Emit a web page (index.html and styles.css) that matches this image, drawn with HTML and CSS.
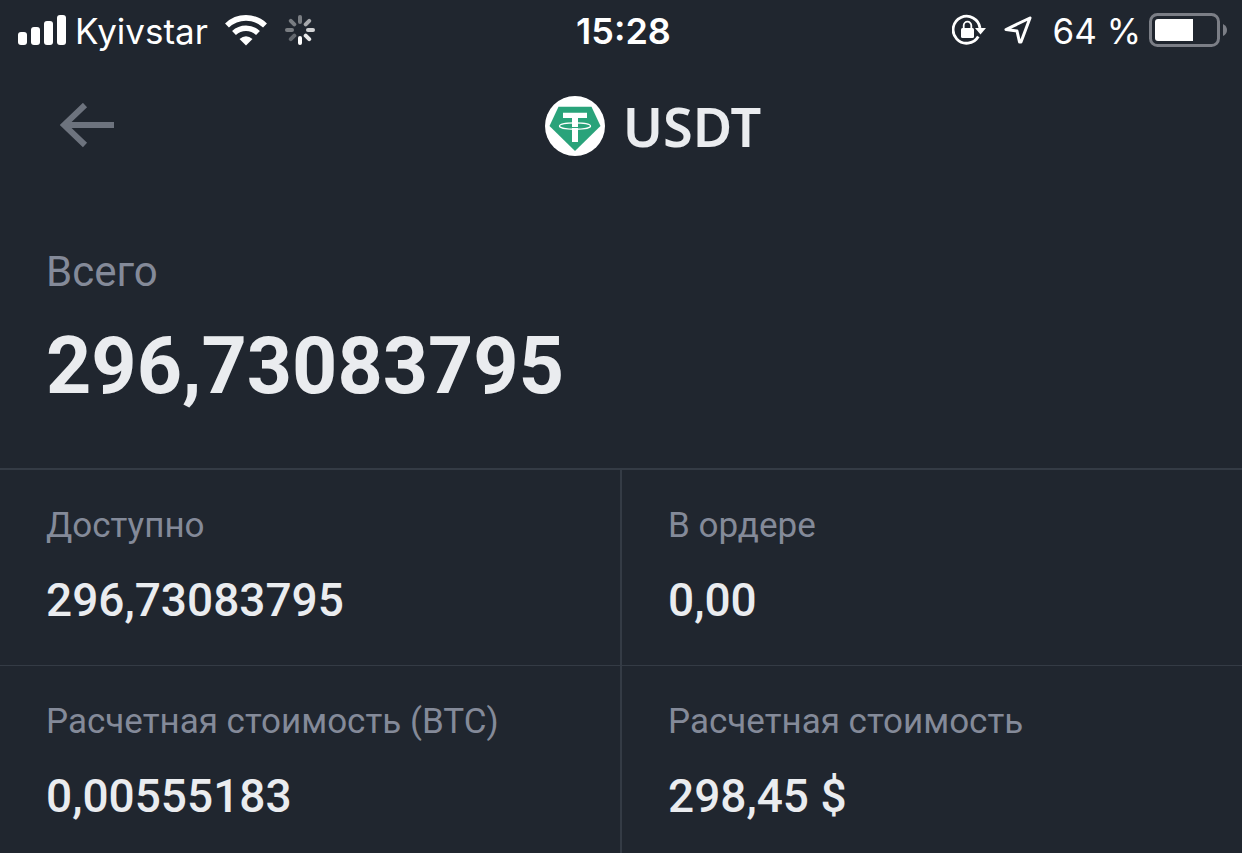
FILE: index.html
```html
<!DOCTYPE html>
<html lang="ru">
<head>
<meta charset="utf-8">
<meta name="viewport" content="width=device-width, initial-scale=1">
<title>USDT</title>
<link rel="stylesheet" href="styles.css">
</head>
<body>
<div class="status-bar">
  <div class="status-side">
    <svg class="signal" width="48" height="30" viewBox="0 0 48 30" fill="#fff" aria-hidden="true">
      <rect x="0" y="17" width="9" height="13" rx="3"/><rect x="13" y="12" width="9" height="18" rx="3"/><rect x="26" y="6" width="9" height="24" rx="3"/><rect x="39" y="0" width="9" height="30" rx="3"/>
    </svg>
    <span class="carrier">Kyivstar</span>
    <svg class="wifi" width="42" height="31" viewBox="0 0 42 31" fill="none" aria-hidden="true">
      <path d="M2 10.500A27.500 27.500 0 0 1 40 10.500" stroke="#fff" stroke-width="5.600"/><path d="M9 18A17.500 17.500 0 0 1 33 18" stroke="#fff" stroke-width="5.600"/><path d="M14.500 24Q21 18.500 27.500 24L21 30.500Z" fill="#fff"/>
    </svg>
    <svg class="spinner" width="30" height="30" viewBox="-15 -15 30 30" stroke="#fff" stroke-width="4" stroke-linecap="round" aria-hidden="true">
      <path d="M0-8V-13" opacity=".4"/><path d="M5.700-5.700L9.200-9.200" opacity=".6"/><path d="M8 0H13" opacity=".8"/><path d="M5.700 5.700L9.200 9.200" opacity=".9"/><path d="M0 8V13"/><path d="M-5.700 5.700L-9.200 9.200" opacity=".3"/><path d="M-8 0H-13" opacity=".4"/><path d="M-5.700-5.700L-9.200-9.200" opacity=".4"/>
    </svg>
  </div>
  <time class="clock">15:28</time>
  <div class="status-side status-right">
    <svg class="lock" width="34" height="32" viewBox="0 0 34 32" fill="none" aria-hidden="true">
      <path d="M26.300 22.500A13.500 13.500 0 1 1 28 14" stroke="#fff" stroke-width="2.800"/><path d="M23 14H34L28.500 20.500Z" fill="#fff"/><rect x="9" y="14" width="13" height="10" rx="1.500" fill="#fff"/><path d="M11.700 15V11.500a3.800 3.800 0 0 1 7.600 0V15" stroke="#fff" stroke-width="1.800"/>
    </svg>
    <svg class="location" width="28" height="28" viewBox="0 0 28 28" fill="none" stroke="#fff" stroke-width="3" stroke-linejoin="round" aria-hidden="true"><path d="M26 2L2 13.500L13 15L15.500 26H17Z"/></svg>
    <span class="percent">64 %</span>
    <svg class="battery" width="78" height="34" viewBox="0 0 78 34" fill="none" aria-hidden="true">
      <rect x="1.500" y="1.500" width="68" height="31" rx="7" stroke="#7b7e86" stroke-width="3"/><path d="M9 6H44V28H9Q6 28 6 25V9Q6 6 9 6Z" fill="#fff"/><path d="M74 11Q78 13 78 17T74 23Z" fill="#7b7e86"/>
    </svg>
  </div>
</div>
<header class="header">
  <button class="back" type="button" aria-label="Назад">
    <svg width="56" height="46" viewBox="0 0 56 46" fill="none" stroke="#6d737e" stroke-width="6" aria-hidden="true"><path d="M25 2L4 22L25 42M4 22H54"/></svg>
  </button>
  <h1 class="title">
    <svg width="60" height="60" viewBox="0 0 60 60" aria-hidden="true">
      <circle cx="30" cy="30" r="30" fill="#fff"/><path d="M13.500 10.700H46.500L55.500 30L30 55L4.500 30Z" fill="#29a37a"/><path d="M18 16.700H42V22H33V46H27V22H18Z" fill="#fff"/><ellipse cx="30" cy="30" rx="15.500" ry="3.200" fill="none" stroke="#fff" stroke-width="1.300"/><path d="M27 31.500H33" stroke="#29a37a"/>
    </svg>
    <span>USDT</span>
  </h1>
</header>
<main>
  <section class="total">
    <h2 class="total-label">Всего</h2>
    <p class="total-value">296,73083795</p>
  </section>
  <dl class="balances">
    <div class="cell"><dt>Доступно</dt><dd>296,73083795</dd></div>
    <div class="cell"><dt>В ордере</dt><dd>0,00</dd></div>
    <div class="cell"><dt>Расчетная стоимость (BTC)</dt><dd>0,00555183</dd></div>
    <div class="cell"><dt>Расчетная стоимость</dt><dd>298,45 $</dd></div>
  </dl>
</main>
</body>
</html>
```
FILE: styles.css
```css
* { box-sizing: border-box; }
body {
  margin: 0;
  min-height: 100vh;
  background: #20262f;
  color: #eaecef;
  font-family: Roboto, "Liberation Sans", sans-serif;
  display: flex;
  flex-direction: column;
}
svg { display: block; flex: none; }
h1, h2, p, dl, dd { margin: 0; }
.status-bar {
  display: grid;
  grid-template-columns: 1fr auto 1fr;
  align-items: center;
  height: 60px;
  padding: 0 15px 0 18px;
  color: #fff;
  font-family: Inter, sans-serif;
  font-size: 35px;
  line-height: 42px;
}
.status-side { display: flex; align-items: center; white-space: nowrap; }
.status-right { justify-content: flex-end; }
.carrier { margin: 2px 17px 0 9px; }
.wifi { margin-right: 18px; }
.clock { padding: 2px 0 0 2px; font-size: 36px; font-weight: 600; }
.location { margin: 0 20px 0 18px; }
.percent { margin: 2px 8px 0 0; }
.header {
  display: grid;
  grid-template-columns: 1fr auto 1fr;
  align-items: center;
  height: 132px;
  padding: 0 60px;
}
.back {
  justify-self: start;
  padding: 0;
  border: 0;
  background: none;
  cursor: pointer;
}
.title {
  grid-column: 2;
  display: flex;
  align-items: center;
  gap: 18px;
  margin-left: 64px;
  font-family: "Noto Sans", sans-serif;
  font-size: 54px;
  font-weight: 600;
  line-height: 60px;
}
.total { padding: 52px 46px 54px; }
.total-label {
  color: #848a99;
  font-size: 42px;
  font-weight: 400;
  line-height: 56px;
}
.total-value {
  margin-top: 18px;
  font-size: 79px;
  font-weight: 700;
  line-height: 96px;
}
main { display: flex; flex: 1; flex-direction: column; }
.balances {
  flex: 1;
  display: grid;
  grid-template-columns: 1fr 1fr;
  grid-auto-rows: 196px;
  border-top: 2px solid #343b45;
}
.cell { padding: 32px 46px 36px; white-space: nowrap; }
.cell:nth-child(odd) { border-right: 1px solid #343b45; }
.cell:nth-child(even) { border-left: 1px solid #343b45; }
.cell:nth-child(-n+2) { border-bottom: 1px solid #343b45; }
.cell:nth-last-child(-n+2) { height: 100%; }
dt {
  color: #848a99;
  font-size: 35px;
  line-height: 48px;
}
dd {
  margin-top: 22px;
  font-size: 46px;
  font-weight: 500;
  line-height: 56px;
}
```
